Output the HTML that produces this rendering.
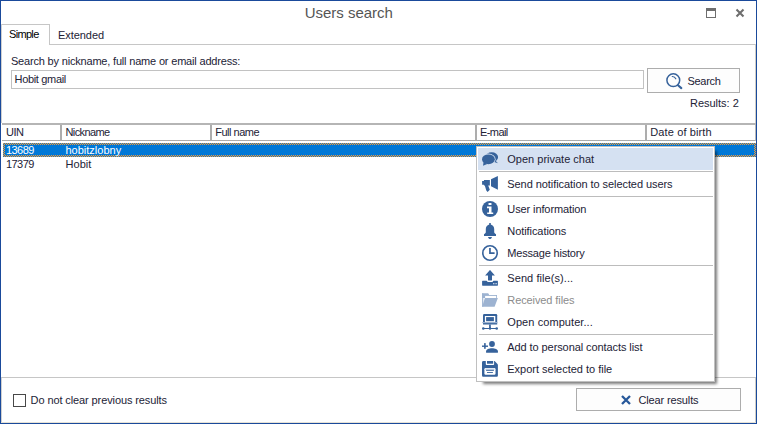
<!DOCTYPE html>
<html><head><meta charset="utf-8"><title>Users search</title>
<style>
html,body{margin:0;padding:0;}
body{width:757px;height:424px;overflow:hidden;background:#fff;font-family:"Liberation Sans",sans-serif;font-size:11px;color:#222236;position:relative;}
#win{position:absolute;left:0;top:0;width:755px;height:422px;border:1px solid #1a4a9b;background:#fff;}
.abs{position:absolute;}
.t{position:absolute;white-space:nowrap;line-height:13px;height:13px;}
.hl{position:absolute;background:#c6c6c6;height:1px;}
.vl{position:absolute;background:#c6c6c6;width:1px;}
.btn{position:absolute;border:1px solid #adadad;background:#fdfdfd;box-sizing:border-box;}
#menu{position:absolute;left:476px;top:146px;width:239px;height:236px;box-sizing:border-box;border:1px solid #c0c0c0;background:#fff;}
.mi{position:absolute;left:1px;width:235px;height:22px;}
.mi svg{position:absolute;left:4px;top:3px;width:16px;height:16px;}
.sep{position:absolute;left:2px;width:234px;height:1px;background:#bcbcbc;}
</style></head><body>
<div id="win"></div>
<!-- title buttons -->
<svg class="abs" style="left:705px;top:7px" width="12" height="12" viewBox="0 0 12 12"><rect x="1.5" y="1.5" width="9" height="9" fill="none" stroke="#6e6e6e" stroke-width="1"/><rect x="1" y="1" width="10" height="3" fill="#6e6e6e"/></svg>
<svg class="abs" style="left:735px;top:8px" width="10" height="10" viewBox="0 0 10 10"><path d="M1.5 1.5 L8.5 8.5 M8.5 1.5 L1.5 8.5" stroke="#6e6e6e" stroke-width="2.1" fill="none"/></svg>

<!-- tabs -->
<div class="hl" style="left:49px;top:44px;width:706px"></div>
<div class="hl" style="left:1px;top:24px;width:49px"></div>
<div class="vl" style="left:49px;top:24px;height:21px"></div>
<div class="vl" style="left:1px;top:24px;height:99px;background:#d0d0d0"></div>
<div class="vl" style="left:1px;top:377px;height:45px;background:#d0d0d0"></div>
<div class="vl" style="left:755px;top:44px;height:79px;background:#cfcdc6"></div>
<div class="vl" style="left:755px;top:123px;height:18px;background:#b8b8b8"></div>
<div class="vl" style="left:755px;top:377px;height:45px;background:#cfcdc6"></div>
<div class="hl" style="left:1px;top:422px;width:755px;background:#e6e2d6"></div>

<div class="abs" style="left:11px;top:70px;width:633px;height:19px;box-sizing:border-box;border:1px solid #c2c2c2;background:#fff"></div>

<div class="btn" style="left:647px;top:68px;width:93px;height:25px"></div>
<svg class="abs" style="left:664px;top:71px" width="20" height="20" viewBox="0 0 20 20"><circle cx="9.3" cy="9.2" r="6.4" fill="none" stroke="#36629b" stroke-width="1.5"/><path d="M14 14.2 L17.3 17.1" stroke="#36629b" stroke-width="2.1" stroke-linecap="round"/><path d="M8.3 5.5 C10 5.7 11.2 6.6 11.8 7.8" stroke="#36629b" stroke-width="1.2" fill="none" stroke-linecap="round"/></svg>

<!-- list header -->
<div class="abs" style="left:2px;top:123px;width:754px;height:2px;background:#b5b5b5"></div>
<div class="abs" style="left:2px;top:140px;width:753px;height:1px;background:#ababab"></div>
<div class="vl" style="left:60px;top:125px;height:15px;background:#adadad;width:2px"></div>
<div class="vl" style="left:210px;top:125px;height:15px;background:#adadad;width:2px"></div>
<div class="vl" style="left:475px;top:125px;height:15px;background:#adadad;width:2px"></div>
<div class="vl" style="left:645px;top:125px;height:15px;background:#adadad;width:2px"></div>

<!-- rows -->
<svg class="abs" style="left:3px;top:143px" width="753" height="14" shape-rendering="crispEdges"><defs><pattern id="ck" width="2" height="2" patternUnits="userSpaceOnUse"><rect width="2" height="2" fill="#0078d7"/><rect x="0" y="0" width="1" height="1" fill="#ff9a2e"/><rect x="1" y="1" width="1" height="1" fill="#ff9a2e"/></pattern></defs><rect width="753" height="14" fill="url(#ck)"/><rect x="2" y="2" width="749" height="10" fill="#0078d7"/></svg>

<!-- bottom -->
<div class="hl" style="left:1px;top:377px;width:755px"></div>
<div class="abs" style="left:13px;top:394px;width:13px;height:13px;box-sizing:border-box;border:1px solid #484848;background:#fff"></div>
<div class="btn" style="left:576px;top:388px;width:165px;height:23px"></div>
<svg class="abs" style="left:620px;top:394px" width="12" height="12" viewBox="0 0 12 12"><path d="M2 2 L10 10 M10 2 L2 10" stroke="#27589a" stroke-width="2.3" fill="none"/></svg>

<!-- context menu -->
<div class="abs" style="left:483px;top:151px;width:234px;height:233px;background:rgba(0,0,0,.52);filter:blur(1.5px)"></div>
<div id="menu">
<div class="mi" style="top:1px;background:#d5e1f2">
<svg viewBox="0 0 16 16"><g fill="#36629b"><ellipse cx="9.7" cy="6.2" rx="6.4" ry="4.9"/><path d="M13.2 9.6 L16.1 12.4 L12.2 11z"/></g><ellipse cx="6.4" cy="8.3" rx="7.2" ry="5.7" fill="#d5e1f2"/><g fill="#36629b"><ellipse cx="6.4" cy="8.3" rx="6.4" ry="4.9"/><path d="M1.6 10.8 L1 14.7 L5.2 12.9z"/></g></svg>
</div>
<div class="sep" style="top:24px"></div>
<div class="mi" style="top:26px">
<svg viewBox="0 0 16 16"><g fill="#36629b"><path d="M15.9 0 V13.8 L9 10.3 V3.2z"/><path d="M0.1 5.1 H1.95 V4 H7.85 V9.5 H6.2 L7.8 13.8 L5.6 15.9 L4.3 14.5 L2.8 9.5 H1.95 V8.75 H0.1z"/></g></svg>
</div>
<div class="sep" style="top:49px"></div>
<div class="mi" style="top:51px">
<svg viewBox="0 0 16 16"><circle cx="8" cy="8" r="8" fill="#36629b"/><g fill="#fff"><rect x="6.5" y="2" width="3" height="2" rx="0.6"/><path d="M5 5.5 H9.5 V11.4 H11.2 V13.1 H5.2 V11.4 H7 V7.2 H5z"/></g></svg>
</div>
<div class="mi" style="top:73px">
<svg viewBox="0 0 16 16"><g fill="#36629b"><path d="M7.2 0 H8.8 V1.4 C11 2 12.2 3.8 12.2 6 V9 C12.2 10 13 10.8 14 11.2 V13 H2 V11.2 C3 10.8 3.8 10 3.8 9 V6 C3.8 3.8 5 2 7.2 1.4z"/><path d="M6 14 H10 C9.6 15.4 8.8 16 8 16 C7.2 16 6.4 15.4 6 14z"/></g></svg>
</div>
<div class="mi" style="top:95px">
<svg viewBox="0 0 16 16"><circle cx="8" cy="8" r="7.2" fill="none" stroke="#36629b" stroke-width="1.6"/><path d="M7.95 3 V8.05 H12.6" fill="none" stroke="#36629b" stroke-width="1.7"/></svg>
</div>
<div class="sep" style="top:118px"></div>
<div class="mi" style="top:120px">
<svg viewBox="0 0 16 16"><g fill="#36629b"><path d="M8 -0.1 L12.9 5.5 H10 V10 C10 10.4 9.6 10.6 9.2 10.6 H6.8 C6.4 10.6 6 10.4 6 10 V5.5 H3.1z"/><path d="M0.6 10.7 H4.6 L5.8 12.1 H10.4 L11.4 10.7 H15.4 C15.7 10.7 15.9 10.9 15.9 11.2 V15.2 C15.9 15.5 15.7 15.7 15.4 15.7 H0.6 C0.3 15.7 0.1 15.5 0.1 15.2 V11.2 C0.1 10.9 0.3 10.7 0.6 10.7z"/></g><rect x="11.2" y="13" width="1.2" height="1.3" fill="#dfe7f2"/><rect x="13.5" y="13" width="1.2" height="1.3" fill="#dfe7f2"/></svg>
</div>
<div class="mi" style="top:142px">
<svg viewBox="0 0 16 16"><g fill="#9db3d1"><path d="M0.1 1.3 H6.2 L7.2 3 H15 V6 H0.1z"/><rect x="0.1" y="1.3" width="1.2" height="13.4"/></g><path d="M3.1 3.9 H14.2 V6 H3.1z" fill="#fff"/><path d="M2.9 6 H15.9 L12.6 14.7 H0.1 z" fill="#9db3d1"/></svg>
</div>
<div class="mi" style="top:164px">
<svg viewBox="0 0 16 16"><rect x="1" y="0" width="14.2" height="9" rx="1.2" fill="#36629b"/><rect x="2.9" y="2" width="10.4" height="6.3" fill="#fff"/><rect x="4.1" y="3.1" width="7.8" height="4.1" fill="#36629b"/><rect x="0" y="8.2" width="16" height="0.9" fill="#a9bcd8"/><g fill="#36629b"><rect x="1" y="9.1" width="14.2" height="1.4"/><rect x="7.1" y="10.5" width="1.7" height="4"/><rect x="0.8" y="14" width="14.6" height="1"/><circle cx="1.3" cy="14.5" r="1.3"/><circle cx="8" cy="14.5" r="1.2"/><circle cx="14.7" cy="14.5" r="1.3"/></g></svg>
</div>
<div class="sep" style="top:187px"></div>
<div class="mi" style="top:189px">
<svg viewBox="0 0 16 16"><g fill="#36629b"><circle cx="10" cy="5" r="2.9"/><path d="M4.1 13.8 V12.2 C4.1 10.5 7 9.3 10 9.3 C13 9.3 15.9 10.5 15.9 12.2 V13.8z"/><rect x="0" y="6.5" width="6" height="1.4"/><rect x="2.1" y="4.1" width="1.6" height="5.7"/></g></svg>
</div>
<div class="mi" style="top:211px">
<svg viewBox="0 0 16 16"><path d="M1.5 0 H12.6 L15.9 3.4 V14.3 C15.9 15.3 15.4 15.8 14.4 15.8 H1.5 C0.5 15.8 0 15.3 0 14.3 V1.5 C0 0.5 0.5 0 1.5 0z" fill="#36629b"/><path d="M3.8 0 H12.1 V3.2 C12.1 3.7 11.8 3.9 11.4 3.9 H4.5 C4.1 3.9 3.8 3.7 3.8 3.2z" fill="#fff"/><rect x="5" y="0" width="6.15" height="2.7" fill="#36629b"/><rect x="2.4" y="7" width="11.1" height="6.8" rx="1.2" fill="#fff"/><rect x="3.4" y="7.5" width="9.1" height="1.4" fill="#c5d3e8"/><rect x="4.1" y="8.85" width="7.8" height="0.95" fill="#36629b"/><rect x="5" y="11" width="5.9" height="0.9" fill="#36629b"/></svg>
</div>
</div>
<div class="t" id="title" style="left:304.78px;top:4px;letter-spacing:-0.025px;font-size:15px;line-height:18px;height:18px;color:#555">Users search</div>
<div class="t" id="simple" style="left:9.00px;top:28px;letter-spacing:-0.672px;color:#000">Simple</div>
<div class="t" id="ext" style="left:58.00px;top:29px;letter-spacing:-0.060px;">Extended</div>
<div class="t" id="lbl" style="left:10.94px;top:55px;letter-spacing:-0.183px;">Search by nickname, full name or email address:</div>
<div class="t" id="inp" style="left:14.58px;top:73px;letter-spacing:-0.336px;">Hobit gmail</div>
<div class="t" id="sbtn" style="left:687.58px;top:75px;letter-spacing:-0.336px;">Search</div>
<div class="t" id="res" style="left:690.00px;top:97px;letter-spacing:-0.016px;">Results: 2</div>
<div class="t" id="h1" style="left:6.08px;top:126px;letter-spacing:-0.560px;">UIN</div>
<div class="t" id="h2" style="left:65.50px;top:126px;letter-spacing:-0.600px;">Nickname</div>
<div class="t" id="h3" style="left:215.22px;top:126px;letter-spacing:-0.490px;">Full name</div>
<div class="t" id="h4" style="left:480.00px;top:126px;letter-spacing:-0.588px;">E-mail</div>
<div class="t" id="h5" style="left:650.22px;top:126px;letter-spacing:0.128px;">Date of birth</div>
<div class="t" id="r1a" style="left:6.08px;top:144px;letter-spacing:-0.595px;color:#fff">13689</div>
<div class="t" id="r1b" style="left:65.50px;top:144px;letter-spacing:0.000px;color:#fff">hobitzlobny</div>
<div class="t" id="r2a" style="left:6.08px;top:158px;letter-spacing:-0.595px;">17379</div>
<div class="t" id="r2b" style="left:65.50px;top:158px;letter-spacing:0.035px;">Hobit</div>
<div class="t" id="chk" style="left:30.58px;top:394px;letter-spacing:-0.105px;">Do not clear previous results</div>
<div class="t" id="clr" style="left:638.50px;top:394px;letter-spacing:-0.140px;">Clear results</div>
<div class="t" id="m1" style="left:507.30px;top:153px;letter-spacing:0.000px;">Open private chat</div>
<div class="t" id="m2" style="left:507.30px;top:178px;letter-spacing:-0.066px;">Send notification to selected users</div>
<div class="t" id="m3" style="left:507.30px;top:203px;letter-spacing:-0.103px;">User information</div>
<div class="t" id="m4" style="left:507.30px;top:225px;letter-spacing:-0.070px;">Notifications</div>
<div class="t" id="m5" style="left:507.30px;top:247px;letter-spacing:-0.190px;">Message history</div>
<div class="t" id="m6" style="left:507.30px;top:272px;letter-spacing:0.070px;">Send file(s)...</div>
<div class="t" id="m7" style="left:507.30px;top:294px;letter-spacing:-0.097px;color:#8c8c8c">Received files</div>
<div class="t" id="m8" style="left:507.30px;top:316px;letter-spacing:0.075px;">Open computer...</div>
<div class="t" id="m9" style="left:507.30px;top:341px;letter-spacing:-0.085px;">Add to personal contacts list</div>
<div class="t" id="m10" style="left:507.30px;top:363px;letter-spacing:-0.013px;">Export selected to file</div>
</body></html>
